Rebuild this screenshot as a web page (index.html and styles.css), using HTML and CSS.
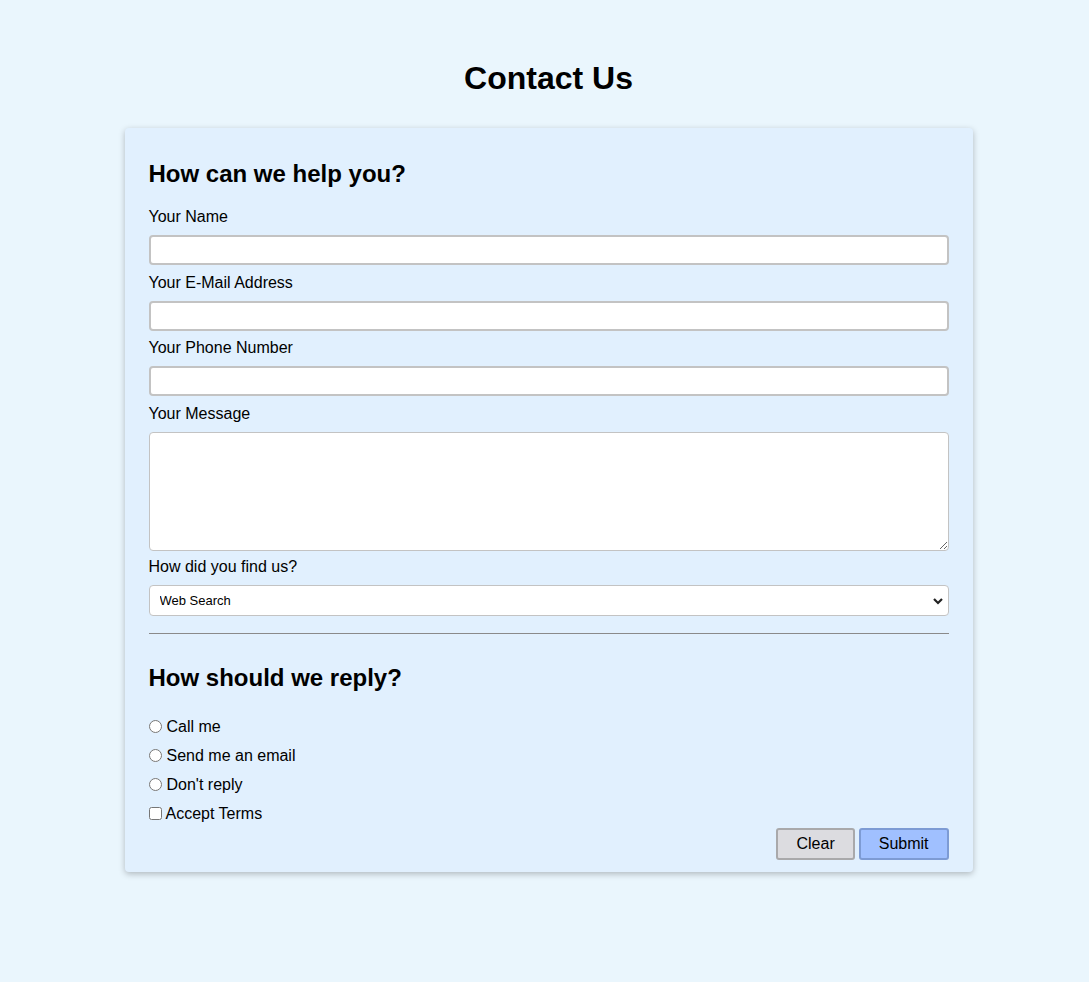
FILE: index.html
```html
<!DOCTYPE html>
<html lang="en">
<head>
<meta charset="utf-8">
<title>Contact Us</title>
<link rel="stylesheet" href="styles.css">
</head>
<body>
<main class="page">
  <h1 class="title">Contact Us</h1>
  <form class="card">
    <h2 class="section-title">How can we help you?</h2>
    <label class="field-label" for="name">Your Name</label>
    <input class="text-input" id="name" type="text">
    <label class="field-label" for="email">Your E-Mail Address</label>
    <input class="text-input" id="email" type="email">
    <label class="field-label" for="phone">Your Phone Number</label>
    <input class="text-input" id="phone" type="tel">
    <label class="field-label" for="msg">Your Message</label>
    <textarea class="text-area" id="msg"></textarea>
    <label class="field-label" for="find">How did you find us?</label>
    <select class="select" id="find">
      <option>Web Search</option>
      <option>Social Media</option>
      <option>Friend</option>
    </select>
    <hr class="divider">
    <h2 class="section-title reply-title">How should we reply?</h2>
    <label class="option"><input type="radio" name="reply" class="radio">Call me</label>
    <label class="option"><input type="radio" name="reply" class="radio">Send me an email</label>
    <label class="option"><input type="radio" name="reply" class="radio">Don't reply</label>
    <label class="option last"><input type="checkbox" class="check">Accept Terms</label>
    <div class="actions">
      <button type="reset" class="btn btn-clear">Clear</button>
      <button type="submit" class="btn btn-submit">Submit</button>
    </div>
  </form>
</main>
</body>
</html>
```
FILE: styles.css
```css
* { box-sizing: border-box; }
html, body {
  margin: 0;
  padding: 0;
  background: #eaf6fd;
  font-family: "Liberation Sans", Arial, Helvetica, sans-serif;
  color: #000;
}
.page {
  padding: 60px 0 40px 8px;
  display: flex;
  flex-direction: column;
  align-items: center;
}
.title {
  margin: 0;
  font-size: 32px;
  line-height: 37px;
  font-weight: bold;
}
.card {
  margin-top: 31px;
  width: 848px;
  background: #e1f0fe;
  border-radius: 4px;
  box-shadow: 0 2px 6px rgba(0, 0, 0, 0.25);
  padding: 32px 24px 12px;
  display: flex;
  flex-direction: column;
}
.section-title {
  margin: 0 0 19px;
  font-size: 24px;
  line-height: 28px;
  font-weight: bold;
}
.reply-title { margin-bottom: 26px; }
.field-label {
  display: block;
  font-size: 16px;
  line-height: 18px;
  margin-bottom: 9px;
  padding-top: 1px;
  height: 19px;
}
.text-input {
  display: block;
  width: 100%;
  height: 30px;
  margin: 0 0 7.5px;
  border: 2px solid #c3c3c3;
  border-radius: 4px;
  background: #fff;
  font: 14px "Liberation Sans", Arial, sans-serif;
  padding: 0 8px;
}
.text-area {
  display: block;
  width: 100%;
  height: 119px;
  margin: 0 0 6.5px;
  border: 1px solid #c3c3c3;
  border-radius: 4px;
  background: #fff;
  font: 14px "Liberation Sans", Arial, sans-serif;
  resize: both;
}
.select {
  display: block;
  width: 100%;
  height: 31px;
  margin: 0;
  border: 1px solid #c3c3c3;
  border-radius: 4px;
  background-color: #fff;
  background-image: url("data:image/svg+xml;utf8,<svg xmlns='http://www.w3.org/2000/svg' width='10' height='8' viewBox='0 0 10 8'><path d='M1 2 L5 6 L9 2' fill='none' stroke='%23222' stroke-width='2.2'/></svg>");
  background-repeat: no-repeat;
  background-position: right 5px center;
  -webkit-appearance: none;
  appearance: none;
  font: 13px "Liberation Sans", Arial, sans-serif;
  color: #000;
  padding: 0 10px;
}
.divider {
  margin: 17px 0 30px;
  border: 0;
  border-top: 1px solid #8a8a8a;
  height: 0;
}
.option {
  display: flex;
  align-items: center;
  font-size: 16px;
  line-height: 18px;
  margin-bottom: 11px;
}
.option.last { margin-bottom: 5px; }
.radio {
  margin: -2px 5px 0 0;
  width: 13px;
  height: 13px;
}
.check {
  margin: -2px 4px 0 0;
  width: 13px;
  height: 13px;
}
.actions {
  display: flex;
  justify-content: flex-end;
  gap: 4px;
}
.btn {
  height: 32px;
  padding: 0 18px;
  border-width: 2px;
  border-style: solid;
  border-radius: 3px;
  font: 16px "Liberation Sans", Arial, sans-serif;
  color: #000;
}
.btn-clear {
  background: #dcdce0;
  border-color: #a9a9ab;
}
.btn-submit {
  background: #a0c0ff;
  border-color: #7d9bd4;
}
```
